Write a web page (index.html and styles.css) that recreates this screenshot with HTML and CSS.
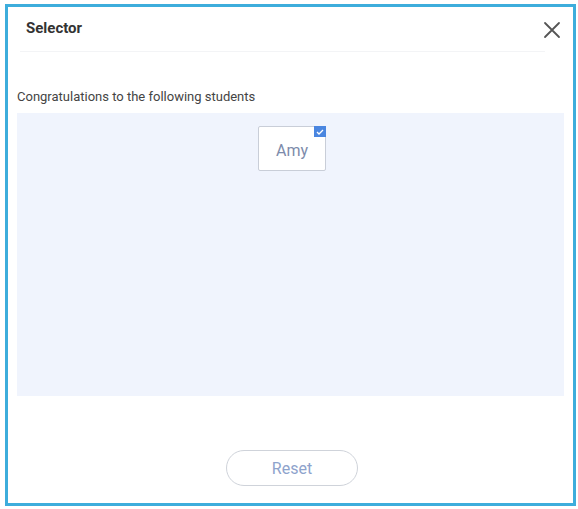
FILE: index.html
```html
<!DOCTYPE html>
<html lang="en">
<head>
    <meta charset="UTF-8">
    <meta name="viewport" content="width=device-width, initial-scale=1.0">
    <title>Selector</title>
    <link rel="stylesheet" href="styles.css">
</head>
<body>
    <div class="dialog">
        <div class="dialog-header">
            <span class="dialog-title">Selector</span>
            <button class="close-btn" type="button" aria-label="Close">
                <svg width="18" height="18" viewBox="0 0 18 18">
                    <path d="M2 2 L16 16 M16 2 L2 16" stroke="#555" stroke-width="1.8" stroke-linecap="round" fill="none"/>
                </svg>
            </button>
        </div>

        <div class="dialog-body">
            <p class="result-label">Congratulations to the following students</p>
            <div class="result-area">
                <div class="student-card">
                    <span class="student-name">Amy</span>
                    <span class="check-badge">
                        <svg width="8" height="6" viewBox="0 0 8 6">
                            <path d="M1 3 L3 5 L7 1" stroke="#fff" stroke-width="1.3" fill="none"/>
                        </svg>
                    </span>
                </div>
            </div>
        </div>

        <div class="dialog-footer">
            <button class="reset-btn" type="button">Reset</button>
        </div>
    </div>
</body>
</html>
```

FILE: styles.css
```css
body {
    margin: 0;
    background: #fff;
    font-family: Roboto, "Liberation Sans", sans-serif;
}
.dialog {
    box-sizing: border-box;
    width: 571px;
    height: 502px;
    margin: 4px 0 0 5px;
    border: 3px solid #3daddc;
    background: #fff;
    display: flex;
    flex-direction: column;
}
.dialog-header {
    height: 44px;
    margin: 0 28px 0 12px;
    padding: 0 0 0 6px;
    display: flex;
    align-items: center;
    justify-content: space-between;
    border-bottom: 1px solid #f3f4f6;
}
.dialog-title {
    font-size: 15px;
    font-weight: bold;
    color: #333;
    padding-bottom: 2px;
}
.close-btn {
    border: none;
    background: none;
    padding: 0;
    margin: 2px -16px 0 0;
    width: 18px;
    height: 18px;
    cursor: pointer;
}
.dialog-body {
    padding: 0 9px;
}
.result-label {
    margin: 37px 0 9px 0;
    font-size: 13px;
    color: #444;
}
.result-area {
    height: 283px;
    background: #f0f4fd;
    display: flex;
    flex-wrap: wrap;
    justify-content: center;
    align-content: flex-start;
    padding-top: 13px;
    box-sizing: border-box;
}
.student-card {
    position: relative;
    box-sizing: border-box;
    width: 68px;
    height: 45px;
    margin-left: 3px;
    background: #fff;
    border: 1px solid #c9ced8;
    border-radius: 2px;
    display: flex;
    align-items: center;
    justify-content: center;
}
.student-name {
    font-size: 16px;
    color: #7d8bab;
    padding-top: 3px;
}
.check-badge {
    position: absolute;
    top: -1px;
    right: -1px;
    width: 12px;
    height: 11px;
    background: #4a86e0;
    display: flex;
    align-items: center;
    justify-content: center;
}
.dialog-footer {
    display: flex;
    justify-content: center;
    padding-top: 54px;
}
.reset-btn {
    width: 132px;
    height: 36px;
    margin-left: 3px;
    border: 1px solid #cfd3da;
    border-radius: 18px;
    background: #fff;
    color: #8ea3cc;
    font-family: Roboto, "Liberation Sans", sans-serif;
    font-size: 16px;
    cursor: pointer;
}
```
